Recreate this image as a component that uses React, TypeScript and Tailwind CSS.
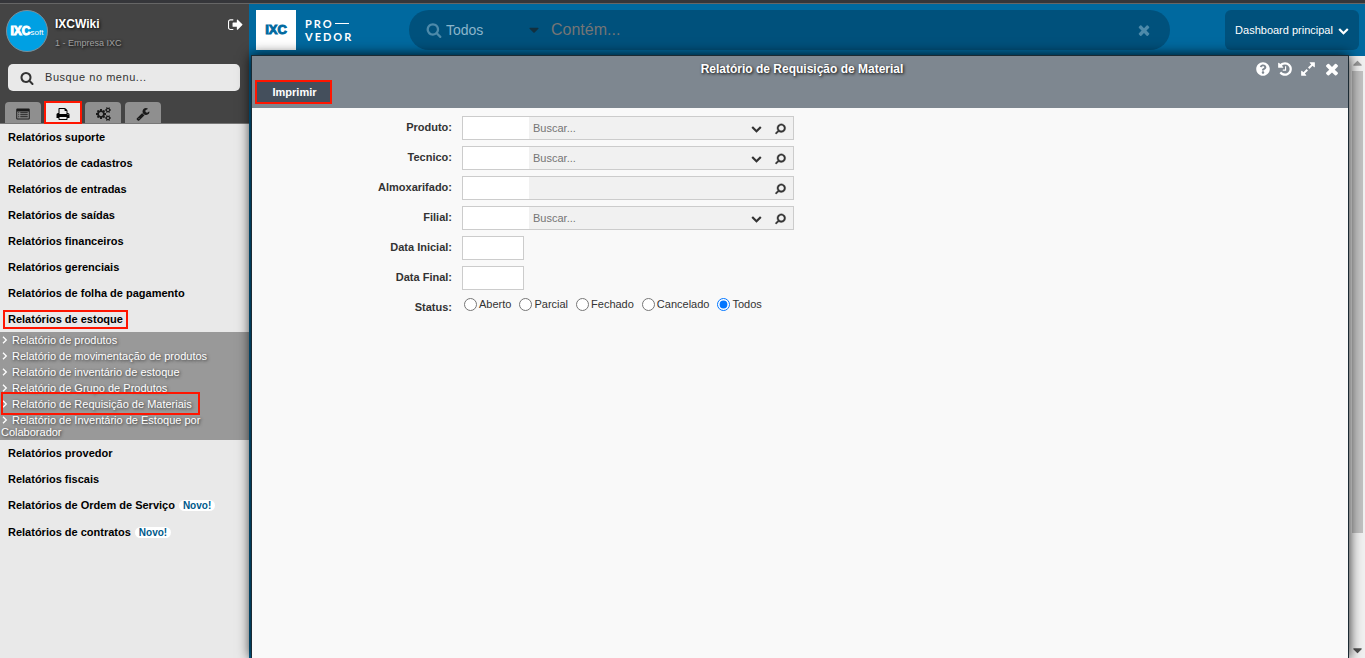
import { useState } from 'react'
import { FaQuestionCircle } from 'react-icons/fa'

const icons = {
  signOut: 'M640 1344q0 4 1 20t.5 26.5-3 23.5-10 19.5-20.5 6.5h-320q-119 0-203.5-84.5t-84.5-203.5v-704q0-119 84.5-203.5t203.5-84.5h320q13 0 22.5 9.5t9.5 22.5q0 4 1 20t.5 26.5-3 23.5-10 19.5-20.5 6.5h-320q-66 0-113 47t-47 113v704q0 66 47 113t113 47h312l11.5 1 11.5 3 8 5.5 7 9 2 13.5zm1088-544q0 26-19 45l-544 544q-19 19-45 19t-45-19-19-45v-288h-448q-26 0-45-19t-19-45v-384q0-26 19-45t45-19h448v-288q0-26 19-45t45-19 45 19l544 544q19 19 19 45z',
  search: 'M1216 832q0-185-131.5-316.5t-316.5-131.5-316.5 131.5-131.5 316.5 131.5 316.5 316.5 131.5 316.5-131.5 131.5-316.5zm512 832q0 52-38 90t-90 38q-54 0-90-38l-343-342q-179 124-399 124-143 0-273.5-55.5t-225-150-150-225-55.5-273.5 55.5-273.5 150-225 225-150 273.5-55.5 273.5 55.5 225 150 150 225 55.5 273.5q0 220-124 399l343 343q37 37 37 90z',
  list: 'M160 192h1472q128 0 128 128v1152q0 128-128 128h-1472q-128 0-128-128v-1152q0-128 128-128zm0 384v896h1472v-896h-1472zm128 96h128v128h-128v-128zm256 0h960v128h-960v-128zm-256 256h128v128h-128v-128zm256 0h960v128h-960v-128zm-256 256h128v128h-128v-128zm256 0h960v128h-960v-128z',
  print: 'M448 1536h896v-256h-896v256zm0-640h896v-384h-160q-40 0-68-28t-28-68v-160h-640v640zm1152 64q0-26-19-45t-45-19-45 19-19 45 19 45 45 19 45-19 19-45zm128 0v416q0 13-9.5 22.5t-22.5 9.5h-224v160q0 40-28 68t-68 28h-960q-40 0-68-28t-28-68v-160h-224q-13 0-22.5-9.5t-9.5-22.5v-416q0-79 56.5-135.5t135.5-56.5h64v-544q0-40 28-68t68-28h672q40 0 88 20t76 48l152 152q28 28 48 76t20 88v256h64q79 0 135.5 56.5t56.5 135.5z',
  cogs: 'M896 896q0-106-75-181t-181-75-181 75-75 181 75 181 181 75 181-75 75-181zm768 512q0-52-38-90t-90-38-90 38-38 90q0 53 37.5 90.5t90.5 37.5 90.5-37.5 37.5-90.5zm0-1024q0-52-38-90t-90-38-90 38-38 90q0 53 37.5 90.5t90.5 37.5 90.5-37.5 37.5-90.5zm-384 421v185q0 10-7 19.5t-16 10.5l-155 24q-11 35-32 76 34 48 90 115 7 11 7 20 0 12-7 19-23 30-82.5 89.5t-78.5 59.5q-11 0-21-7l-115-90q-37 19-77 31-11 108-23 155-7 24-30 24h-186q-11 0-20-7.5t-10-17.5l-23-153q-34-10-75-31l-118 89q-7 7-20 7-11 0-21-8-144-133-144-160 0-9 7-19 10-14 41-53t47-61q-23-44-35-82l-152-24q-10-1-17-9.5t-7-19.5v-185q0-10 7-19.5t16-10.5l155-24q11-35 32-76-34-48-90-115-7-11-7-20 0-12 7-20 22-30 82-89t79-59q11 0 21 7l115 90q34-18 77-32 11-108 23-154 7-24 30-24h186q11 0 20 7.5t10 17.5l23 153q34 10 75 31l118-89q8-7 20-7 11 0 21 8 144 133 144 160 0 8-7 19-12 16-42 54t-45 60q23 48 34 82l152 23q10 2 17 10.5t7 19.5zm640 533v140q0 16-149 31-12 27-30 52 51 113 51 138 0 4-4 7-122 71-124 71-8 0-46-47t-52-68q-20 2-30 2t-30-2q-14 21-52 68t-46 47q-2 0-124-71-4-3-4-7 0-25 51-138-18-25-30-52-149-15-149-31v-140q0-16 149-31 13-29 30-52-51-113-51-138 0-4 4-7 4-2 35-20t59-34 30-16q8 0 46 46.5t52 67.5q20-2 30-2t30 2q51-71 92-112l6-2q4 0 124 70 4 3 4 7 0 25-51 138 17 23 30 52 149 15 149 31zm0-1024v140q0 16-149 31-12 27-30 52 51 113 51 138 0 4-4 7-122 71-124 71-8 0-46-47t-52-68q-20 2-30 2t-30-2q-14 21-52 68t-46 47q-2 0-124-71-4-3-4-7 0-25 51-138-18-25-30-52-149-15-149-31v-140q0-16 149-31 13-29 30-52-51-113-51-138 0-4 4-7 4-2 35-20t59-34 30-16q8 0 46 46.5t52 67.5q20-2 30-2t30 2q51-71 92-112l6-2q4 0 124 70 4 3 4 7 0 25-51 138 17 23 30 52 149 15 149 31z',
  wrench: 'M448 1472q0-26-19-45t-45-19-45 19-19 45 19 45 45 19 45-19 19-45zm644-420l-682 682q-37 37-90 37-52 0-91-37l-106-108q-38-36-38-90 0-53 38-91l681-681q39 98 114.5 173.5t173.5 114.5zm634-435q0 39-23 106-47 134-164.5 217.5t-258.5 83.5q-185 0-316.5-131.5t-131.5-316.5 131.5-316.5 316.5-131.5q58 0 121.5 16.5t107.5 46.5q16 11 16 28t-16 28l-293 169v224l193 107q5-3 79-48.5t135.5-81 70.5-35.5q15 0 23.5 10t8.5 25z',
  times: 'M1490 1322q0 40-28 68l-136 136q-28 28-68 28t-68-28l-294-294-294 294q-28 28-68 28t-68-28l-136-136q-28-28-28-68t28-68l294-294-294-294q-28-28-28-68t28-68l136-136q28-28 68-28t68 28l294 294 294-294q28-28 68-28t68 28l136 136q28 28 28 68t-28 68l-294 294 294 294q28 28 28 68z',
  chevron: 'M1683 808l-742 741q-19 19-45 19t-45-19l-742-741q-19-19-19-45.5t19-45.5l166-165q19-19 45-19t45 19l531 531 531-531q19-19 45-19t45 19l166 165q19 19 19 45.5t-19 45.5z',
  expand: 'M883 1056q0 13-10 23l-332 332 144 144q19 19 19 45t-19 45-45 19h-448q-26 0-45-19t-19-45v-448q0-26 19-45t45-19 45 19l144 144 332-332q10-10 23-10t23 10l114 114q10 10 10 23zm781-864v448q0 26-19 45t-45 19-45-19l-144-144-332 332q-10 10-23 10t-23-10l-114-114q-10-10-10-23t10-23l332-332-144-144q-19-19-19-45t19-45 45-19h448q26 0 45 19t19 45z',
  history: 'M1664 896q0 156-61 298t-164 245-245 164-298 61q-172 0-327-72.5t-264-204.5q-7-10-6.5-22.5t8.5-20.5l137-138q10-9 25-9 16 2 23 12 73 95 179 147t225 52q104 0 198.5-40.5t163.5-109.5 109.5-163.5 40.5-198.5-40.5-198.5-109.5-163.5-163.5-109.5-198.5-40.5q-98 0-188 35.5t-160 101.5l137 138q31 30 14 69-17 40-59 40h-448q-26 0-45-19t-19-45v-448q0-42 40-59 39-17 69 14l130 129q107-101 244.5-156.5t284.5-55.5q156 0 298 61t245 164 164 245 61 298zm-640-288v448q0 14-9 23t-23 9h-320q-14 0-23-9t-9-23v-64q0-14 9-23t23-9h224v-352q0-14 9-23t23-9h64q14 0 23 9t9 23z',
  caret: 'M1408 704q0 26-19 45l-448 448q-19 19-45 19t-45-19l-448-448q-19-19-19-45t19-45 45-19h896q26 0 45 19t19 45z',
}

type IconName = keyof typeof icons

const Icon = ({ name, className = '' }: { name: IconName; className?: string }) => (
  <svg viewBox="0 0 1792 1792" fill="currentColor" fillRule="evenodd" aria-hidden="true" className={`shrink-0 overflow-visible ${className}`}>
    <path d={icons[name]} />
  </svg>
)

const tabs: { icon: IconName; label: string }[] = [
  { icon: 'list', label: 'Menu' },
  { icon: 'print', label: 'Relatórios' },
  { icon: 'cogs', label: 'Configurações' },
  { icon: 'wrench', label: 'Ferramentas' },
]

const menu = [
  { title: 'Relatórios suporte' },
  { title: 'Relatórios de cadastros' },
  { title: 'Relatórios de entradas' },
  { title: 'Relatórios de saídas' },
  { title: 'Relatórios financeiros' },
  { title: 'Relatórios gerenciais' },
  { title: 'Relatórios de folha de pagamento' },
  {
    title: 'Relatórios de estoque',
    marked: true,
    items: [
      'Relatório de produtos',
      'Relatório de movimentação de produtos',
      'Relatório de inventário de estoque',
      'Relatório de Grupo de Produtos',
      'Relatório de Requisição de Materiais',
      'Relatório de Inventário de Estoque por Colaborador',
    ],
  },
  { title: 'Relatórios provedor' },
  { title: 'Relatórios fiscais' },
  { title: 'Relatórios de Ordem de Serviço', isNew: true },
  { title: 'Relatórios de contratos', isNew: true },
]

const lookups = [
  { id: 'produto', label: 'Produto:', combo: true },
  { id: 'tecnico', label: 'Tecnico:', combo: true },
  { id: 'almoxarifado', label: 'Almoxarifado:', combo: false },
  { id: 'filial', label: 'Filial:', combo: true },
]

const statuses = ['Aberto', 'Parcial', 'Fechado', 'Cancelado', 'Todos']

const Sidebar = () => {
  const [tab, setTab] = useState('print')

  return (
    <aside className="flex w-[249px] shrink-0 flex-col bg-[#e9e9e9]">
      <div className="border-b border-[#777] bg-[#444]">
        <div className="flex items-start pt-[6px] pr-[6px] pl-[6px]">
          <div className="flex size-[42px] shrink-0 items-center justify-center rounded-full border border-[#7a8f9a] bg-[#00a0e3] font-bold text-white">
            <span className="text-[12px] leading-4 [-webkit-text-stroke:1px_white]">IXC</span>
            <span className="mt-1 text-[8px] leading-3 font-normal">soft</span>
          </div>
          <div className="flex-1 pt-[6px] pl-[7px]">
            <div className="text-[12px] leading-4 font-bold text-white [text-shadow:1px_1px_3px_#000]">IXCWiki</div>
            <div className="mt-[5px] text-[9px] leading-3 text-[#a0a0a0] [text-shadow:1px_1px_3px_#000]">1 - Empresa IXC</div>
          </div>
          <button aria-label="Sair" className="pt-2 text-white">
            <Icon name="signOut" className="size-[15px]" />
          </button>
        </div>

        {/* busca do menu */}
        <label className="mr-[9px] ml-2 mt-3 flex h-[27px] items-center rounded-[5px] bg-[#e9e9e9] pl-3 text-[#333]">
          <Icon name="search" className="size-[14px]" />
          <input aria-label="Busque no menu" placeholder="Busque no menu..." className="ml-[11px] min-w-0 flex-1 bg-transparent text-[11px] tracking-wider outline-none placeholder:text-[#333]" />
        </label>

        <div className="mt-[11px] flex gap-1 pl-[5px]">
          {tabs.map((t) => (
            <button
              key={t.icon}
              aria-label={t.label}
              onClick={() => setTab(t.icon)}
              className={`flex h-[21px] w-9 items-center justify-center pt-[3px] ${tab === t.icon ? 'bg-[#e9e9e9] text-black outline-2 -outline-offset-1 outline-[#ff1500]' : 'rounded-t-[4px] bg-[#8f8f8f] text-[#1a1a1a]'}`}
            >
              <Icon name={t.icon} className="size-[14px]" />
            </button>
          ))}
        </div>
      </div>

      <nav>
        {menu.map((m) => (
          <div key={m.title}>
            <a href="#" className={`flex items-center px-2 text-[11px] font-bold text-black ${m.isNew ? 'h-[27px]' : 'h-[26px]'}`}>
              <span className={m.marked ? '-mx-[5px] border-2 border-[#ff1500] px-[3px] leading-[15px]' : ''}>{m.title}</span>
              {m.isNew && <span className="ml-1 rounded-full bg-white px-1 text-[10px] leading-[11px] text-[#005a8c]">Novo!</span>}
            </a>
            {m.items && (
              <ul className="bg-[#999] text-[11px] leading-3 text-white [text-shadow:1px_1px_3px_#333]">
                {m.items.map((item) => (
                  <li key={item} className="relative py-[2px] pr-10 pl-px">
                    <a href="#">
                      <svg viewBox="0 0 7 8" className="mr-1 inline-block h-2 w-[7px] align-baseline" fill="none" stroke="currentColor" strokeWidth="1.3" aria-hidden="true">
                        <path d="M2 .7 5.3 4 2 7.3" />
                      </svg>
                      {item}
                    </a>
                    {item.endsWith('Materiais') && <span className="pointer-events-none absolute -top-1 left-px h-[23px] w-[199px] border-2 border-[#ff1500]" />}
                  </li>
                ))}
              </ul>
            )}
          </div>
        ))}
      </nav>
    </aside>
  )
}

const Header = () => (
  <header className="flex h-[51px] shrink-0 items-start bg-[#00699f] pt-[6px] pr-[6px] pl-[7px]">
    <div className="flex w-[153px] shrink-0 items-center">
      <div className="flex size-10 items-center justify-center bg-white text-[13px] font-bold text-[#00699f] [-webkit-text-stroke:1px_#00699f]">IXC</div>
      <div className="ml-[9px] font-['Lato'] text-[11px] leading-[13px] font-bold tracking-[2px] text-white">
        <div className="flex items-center">PRO<span className="ml-px h-px w-[14px] bg-white" /></div>
        <div>VEDOR</div>
      </div>
    </div>
    <div className="mr-[55px] flex h-10 min-w-0 flex-1 items-center rounded-full bg-[#00517c] pr-[18px] pl-[17px] text-[#8bb5cb]">
      <Icon name="search" className="size-4 text-[#4d8aaa]" />
      <div className="ml-1 flex w-[93px] items-center">
        <select aria-label="Filtro" className="min-w-0 flex-1 appearance-none bg-transparent text-[14px] outline-none">
          <option>Todos</option>
        </select>
        <Icon name="caret" className="-mr-[3px] size-4 text-[#12303f]" />
      </div>
      <input aria-label="Contém" placeholder="Contém..." className="min-w-0 flex-1 bg-transparent pl-3 text-[16px] outline-none placeholder:text-[#757575]" />
      <button aria-label="Limpar" className="text-[#4d8aaa]">
        <Icon name="times" className="size-4" />
      </button>
    </div>
    <button className="flex h-10 w-[134px] shrink-0 items-center justify-center gap-[5px] rounded-md bg-[#00517c] text-[11px] text-white">
      Dashboard principal
      <Icon name="chevron" className="size-[11px]" />
    </button>
  </header>
)

const ReportForm = () => {
  const [status, setStatus] = useState('Todos')

  return (
    <form className="flex flex-col gap-[6px] pt-2 text-[11px] text-[#333]">
      {lookups.map((f) => (
        <div key={f.id} className="flex gap-[10px]">
          <label htmlFor={f.id} className="w-[200px] text-right leading-[23px] font-bold">{f.label}</label>
          <div className="flex h-6 w-[332px] items-center border border-[#ccc] bg-[#f1f1f1]">
            <input id={f.id} className="h-full w-[66px] bg-white px-1 outline-none" />
            <input aria-label={`${f.label} descrição`} placeholder={f.combo ? 'Buscar...' : ''} className="h-full min-w-0 flex-1 bg-transparent px-1 outline-none placeholder:text-[#757575]" />
            {f.combo && (
              <button type="button" aria-label="Abrir lista" className="px-[7px]">
                <Icon name="chevron" className="size-[11px]" />
              </button>
            )}
            <button type="button" aria-label="Pesquisar" className="pr-[7px] pl-[6px]">
              <Icon name="search" className="size-[11px] -scale-x-100 stroke-current stroke-[60px]" />
            </button>
          </div>
        </div>
      ))}

      {['Data Inicial:', 'Data Final:'].map((label) => (
        <div key={label} className="flex gap-[10px]">
          <label htmlFor={label} className="w-[200px] text-right leading-[23px] font-bold">{label}</label>
          <input id={label} className="h-6 w-[62px] border border-[#ccc] bg-white px-1 outline-none" />
        </div>
      ))}

      <fieldset className="flex gap-[10px]">
        <span className="w-[200px] text-right leading-[23px] font-bold">Status:</span>
        <div className="flex h-[17px] items-center gap-2 pl-[2px]">
          {statuses.map((s) => (
            <label key={s} className="flex items-center gap-[2px]">
              <input type="radio" name="status" checked={status === s} onChange={() => setStatus(s)} className="m-0 size-[13px]" />
              {s}
            </label>
          ))}
        </div>
      </fieldset>
    </form>
  )
}

export default function App() {
  return (
    <div className="flex h-screen flex-col overflow-hidden bg-[#00699f] font-['Liberation_Sans',Arial,sans-serif]">
      <div className="h-1 shrink-0 border-b border-[#666] bg-[#35363a]" />
      <div className="flex min-h-0 flex-1">
        <Sidebar />
        <div className="flex min-w-0 flex-1 flex-col">
          <Header />
          <div className="flex min-h-0 flex-1">
            <main className="relative z-10 ml-[2px] flex min-w-0 flex-1 flex-col border-x border-t border-[#1b2a33] bg-[#f9f9f9] shadow-[0_0_12px_rgba(0,0,0,0.9)]">
              <div className="bg-[#7e8790] pb-1">
                <div className="flex h-6 items-center pt-[2px] pr-[7px]">
                  <h1 className="flex-1 pl-[96px] text-center text-[12px] font-bold text-white [text-shadow:1px_1px_3px_#000]">Relatório de Requisição de Material</h1>
                  <div className="flex items-center gap-[7px] text-white">
                    <button aria-label="Ajuda"><FaQuestionCircle size={14} /></button>
                    <button aria-label="Histórico"><Icon name="history" className="size-4" /></button>
                    <button aria-label="Expandir"><Icon name="expand" className="size-4" /></button>
                    <button aria-label="Fechar"><Icon name="times" className="size-[18px]" /></button>
                  </div>
                </div>
                <button className="ml-[3px] block h-6 w-[77px] border-2 border-[#ff1500] bg-[#444f5c] pl-[2px] text-[11px] leading-4 font-bold text-white">Imprimir</button>
              </div>
              <ReportForm />
            </main>

            {/* barra de rolagem */}
            <div className="mt-px flex w-4 shrink-0 flex-col items-center bg-[#f1f1f1] text-[#505050]">
              <Icon name="caret" className="size-[15px] rotate-180 text-[#999]" />
              <div className="w-[11px] flex-[464] bg-[#c1c1c1]" />
              <div className="flex-[110]" />
              <Icon name="caret" className="size-[15px]" />
            </div>
          </div>
        </div>
      </div>
    </div>
  )
}
